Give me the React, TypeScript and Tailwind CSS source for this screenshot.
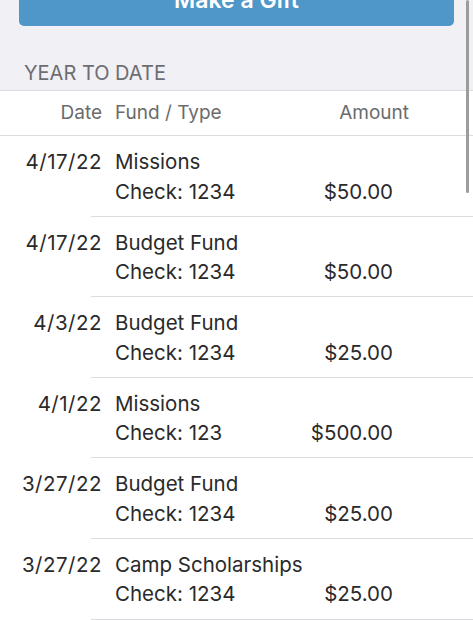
const gifts = [
  { date: "4/17/22", fund: "Missions", type: "Check: 1234", amount: "$50.00" },
  { date: "4/17/22", fund: "Budget Fund", type: "Check: 1234", amount: "$50.00" },
  { date: "4/3/22", fund: "Budget Fund", type: "Check: 1234", amount: "$25.00" },
  { date: "4/1/22", fund: "Missions", type: "Check: 123", amount: "$500.00" },
  { date: "3/27/22", fund: "Budget Fund", type: "Check: 1234", amount: "$25.00" },
  { date: "3/27/22", fund: "Camp Scholarships", type: "Check: 1234", amount: "$25.00" },
];

export default function App() {
  return (
    <div
      className="relative w-[473px] h-[620px] overflow-hidden bg-[#f0f0f5]"
      style={{ fontFamily: 'Inter, "Liberation Sans", Arial, sans-serif' }}
    >
      {/* ── GIVE BUTTON ─────────────────────────── */}
      <div className="px-[19px]">
        <button className="-mt-[26px] w-full h-[52px] rounded-[5px] bg-[#4f97c9] text-white text-[23px] font-semibold flex items-center justify-center">
          Make a Gift
        </button>
      </div>

      {/* ── SECTION LABEL ───────────────────────── */}
      <p className="pl-6 pt-[33px] h-[64px] text-[20px] leading-[28px] text-[#6d6d72]">
        YEAR TO DATE
      </p>

      {/* ── TABLE ───────────────────────────────── */}
      <div className="bg-white border-t border-[#dcdcdf]">
        <div className="flex items-center h-[45px] border-b border-[#dcdcdf] text-[19px] text-[#6b6b6b]">
          <span className="w-[102px] text-right">Date</span>
          <span className="ml-[13px]">Fund / Type</span>
          <span className="ml-auto mr-[64px]">Amount</span>
        </div>

        {gifts.map((g, i) => (
          <div key={i}>
            <div className="flex h-[79.6px] pt-[11px] text-[20.5px] leading-[29.5px] text-[#2a2a2a]">
              <span className="w-[102px] text-right tracking-[0.5px]">{g.date}</span>
              <div className="ml-[13px] flex-1 pr-[80px]">
                <div>{g.fund}</div>
                <div className="flex justify-between">
                  <span>{g.type}</span>
                  <span>{g.amount}</span>
                </div>
              </div>
            </div>
            <div className="ml-[91px] h-px bg-[#dcdcdf]" />
          </div>
        ))}
      </div>

      {/* scroll indicator */}
      <div className="absolute right-[4px] top-0 w-[3px] h-[193px] rounded-full bg-[#9c9c9c]" />
    </div>
  );
}
